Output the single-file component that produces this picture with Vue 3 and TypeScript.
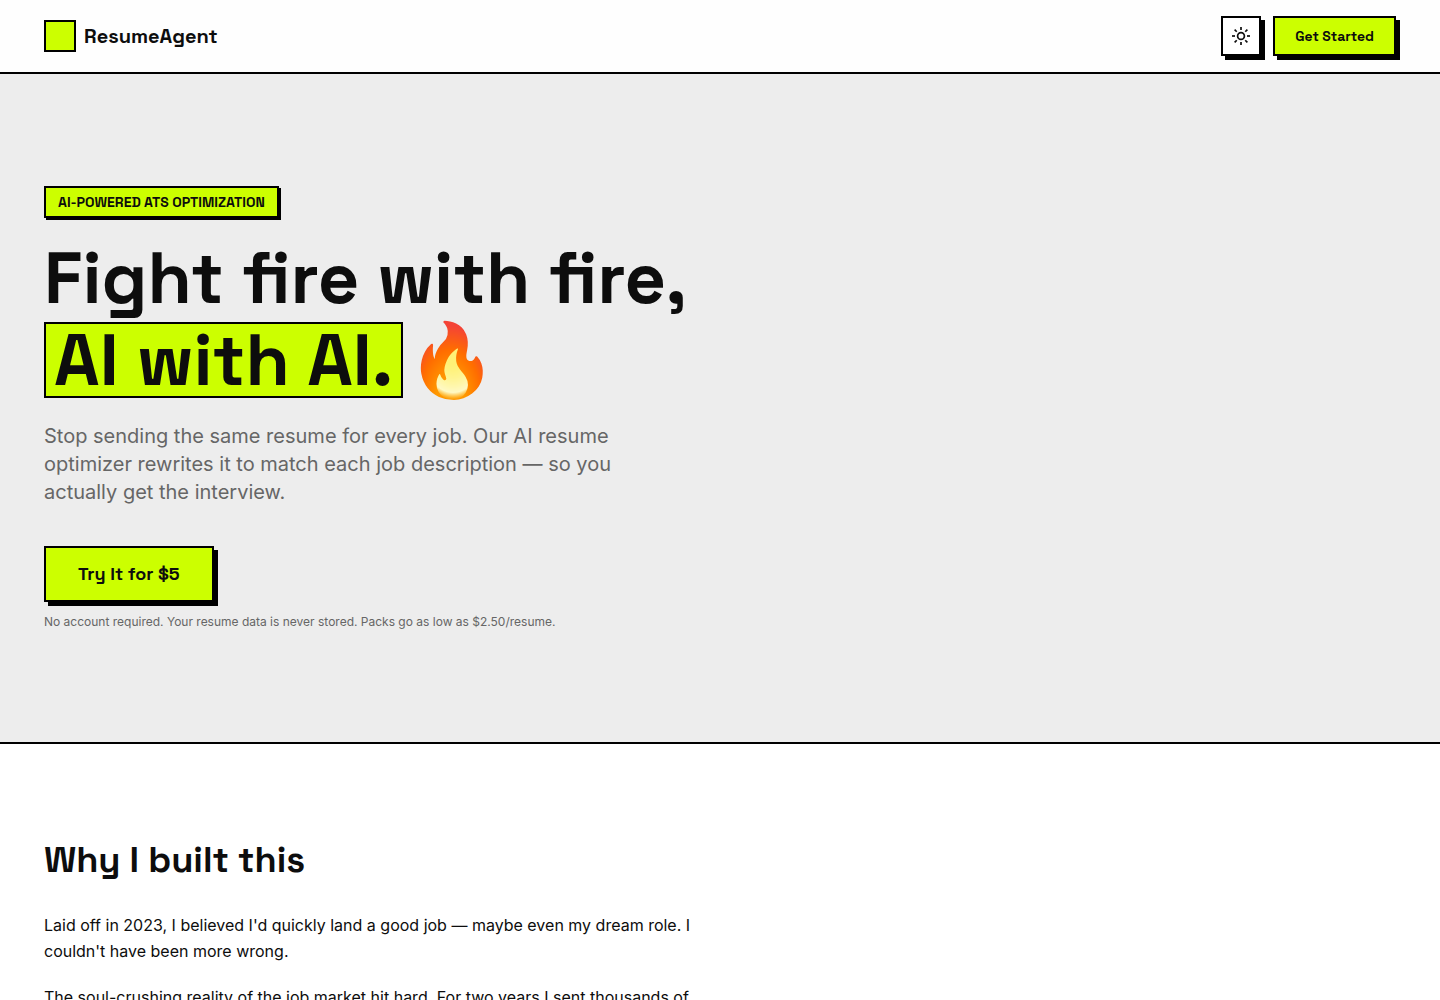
<script setup lang="ts">
import { ref } from 'vue'

const dark = ref(false)
const rays: number[] = [0, 45, 90, 135, 180, 225, 270, 315]
const story: string[] = [
  "Laid off in 2023, I believed I'd quickly land a good job — maybe even my dream role. I couldn't have been more wrong.",
  'The soul-crushing reality of the job market hit hard. For two years I sent thousands of',
]
</script>

<template>
  <div class="page">
    <header class="bar">
      <a class="brand" href="#top">
        <span class="mark"></span>
        <span>ResumeAgent</span>
      </a>
      <nav class="actions">
        <button class="toggle" type="button" aria-label="Toggle theme" :aria-pressed="dark" @click="dark = !dark">
          <svg width="20" height="20" viewBox="0 0 20 20" fill="none" stroke="currentColor" stroke-width="1.7" aria-hidden="true">
            <circle cx="10" cy="10" r="3.4" />
            <path v-for="r in rays" :key="r" d="M10 1v3" :transform="`rotate(${r} 10 10)`" />
          </svg>
        </button>
        <button class="start" type="button">Get Started</button>
      </nav>
    </header>

    <main>
      <section id="top" class="hero">
        <p class="badge">AI-POWERED ATS OPTIMIZATION</p>
        <h1>
          <span class="line">Fight fire with fire,</span>
          <span class="second">
            <span class="highlight">AI with AI.</span>
            <span>🔥</span>
          </span>
        </h1>
        <p class="lead">Stop sending the same resume for every job. Our AI resume optimizer rewrites it to match each job description — so you actually get the interview.</p>
        <button class="cta" type="button">Try It for $5</button>
        <p class="note">No account required. Your resume data is never stored. Packs go as low as $2.50/resume.</p>
      </section>

      <section class="story">
        <h2>Why I built this</h2>
        <p v-for="text in story" :key="text">{{ text }}</p>
      </section>
    </main>
  </div>
</template>

<style>
body {
  margin: 0;
  background: #fff;
}
</style>

<style scoped>
.page {
  height: 100vh;
  overflow: hidden;
  color: #0d0d0d;
  font-family: Inter, sans-serif;
}
h1, h2, p {
  margin: 0;
}
h1, h2, .brand, .badge, button {
  font-family: "Space Grotesk", Inter, sans-serif;
}
button {
  box-sizing: border-box;
  border: 2px solid #000;
  border-radius: 0;
  color: #0d0d0d;
  box-shadow: 4px 4px 0 #000;
  cursor: pointer;
}
.bar {
  display: flex;
  align-items: center;
  justify-content: space-between;
  padding: 16px 44px;
  border-bottom: 2px solid #000;
  background: #fefefe;
}
.brand {
  display: flex;
  align-items: center;
  gap: 8px;
  color: inherit;
  font-size: 20px;
  line-height: 28px;
  font-weight: 700;
  text-decoration: none;
}
.mark {
  box-sizing: border-box;
  width: 32px;
  height: 32px;
  border: 2px solid #000;
  background: #cf0;
}
.actions {
  display: flex;
  gap: 12px;
}
.toggle {
  display: grid;
  place-items: center;
  width: 40px;
  height: 40px;
  padding: 0;
  background: #fff;
}
.start {
  height: 40px;
  padding: 0 20px;
  background: #cf0;
  font-size: 14px;
  font-weight: 600;
}
.hero {
  display: flex;
  flex-direction: column;
  align-items: flex-start;
  padding: 112px 44px;
  border-bottom: 2px solid #000;
  background: #ededed;
}
.badge {
  padding: 4px 12px;
  border: 2px solid #000;
  background: #cf0;
  box-shadow: 2px 2px 0 #000;
  font-size: 14px;
  line-height: 20px;
  font-weight: 600;
}
h1 {
  margin: 24px 0;
  font-size: 72px;
  font-weight: 700;
}
.line {
  display: block;
  margin-bottom: 8px;
  line-height: 72px;
}
.second {
  display: flex;
  align-items: center;
  gap: 4px;
  line-height: 72px;
}
.highlight {
  padding: 0 8px;
  border: 2px solid #000;
  background: #cf0;
}
.lead {
  max-width: 576px;
  color: #666;
  font-size: 20px;
  line-height: 28px;
}
.cta {
  height: 56px;
  margin: 40px 0 12px;
  padding: 0 32px;
  background: #cf0;
  font-size: 18px;
  line-height: 28px;
  font-weight: 600;
}
.note {
  color: #666;
  font-size: 12px;
  line-height: 16px;
}
.story {
  padding: 96px 44px;
}
h2 {
  margin-bottom: 32px;
  font-size: 36px;
  line-height: 40px;
  font-weight: 700;
}
.story p {
  max-width: 672px;
  margin-bottom: 20px;
  font-size: 16px;
  line-height: 26px;
}
</style>
